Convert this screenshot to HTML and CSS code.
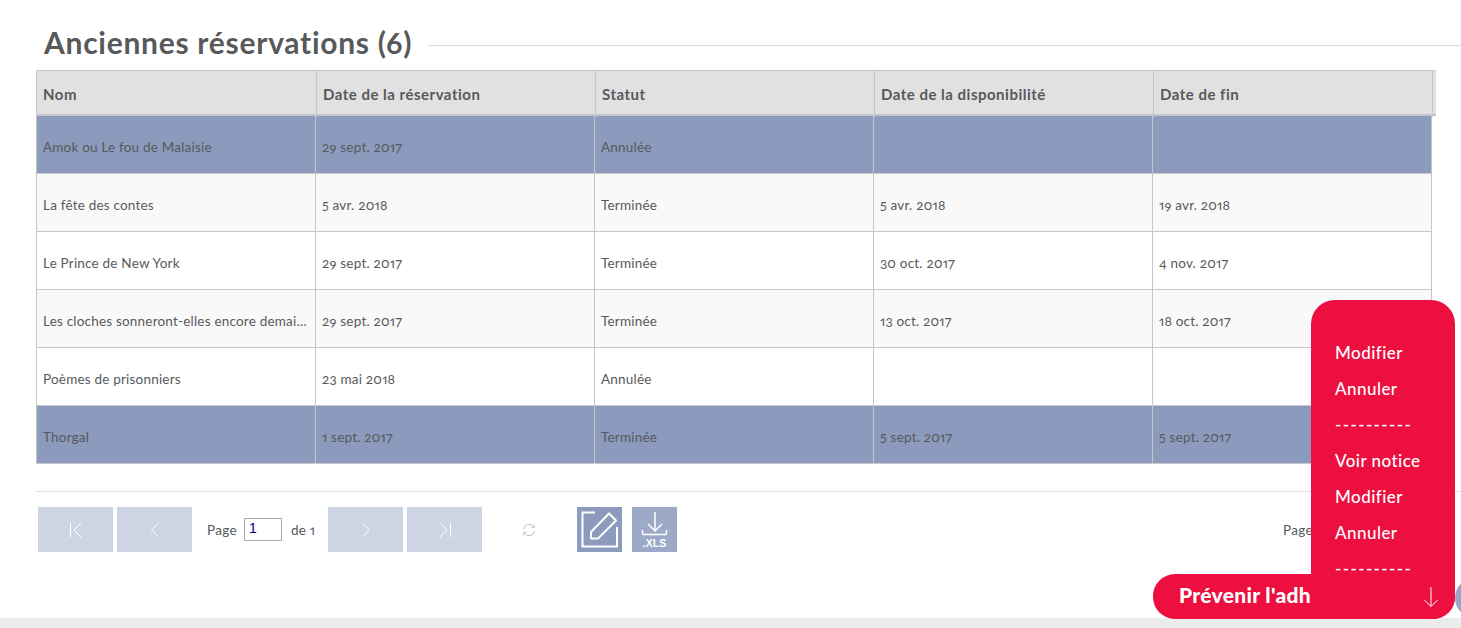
FILE: index.html
```html
<!DOCTYPE html>
<html lang="fr">
<head>
<meta charset="utf-8">
<title>Anciennes réservations</title>
<link rel="stylesheet" href="styles.css">
</head>
<body>
<main class="page">
  <div class="title-row">
    <h2 class="title">Anciennes réservations (6)</h2>
    <span class="title-rule"></span>
  </div>
  <div class="grid-wrap">
    <div class="head">
      <div class="hcell">Nom</div>
      <div class="hcell">Date de la réservation</div>
      <div class="hcell">Statut</div>
      <div class="hcell">Date de la disponibilité</div>
      <div class="hcell">Date de fin</div>
      <div class="hcell hcell-end"></div>
    </div>
    <div class="rows">
      <div class="row row-sel"><div class="cell">Amok ou Le fou de Malaisie</div><div class="cell">29 sept. 2017</div><div class="cell">Annulée</div><div class="cell"></div><div class="cell"></div></div>
      <div class="row row-alt"><div class="cell">La fête des contes</div><div class="cell">5 avr. 2018</div><div class="cell">Terminée</div><div class="cell">5 avr. 2018</div><div class="cell">19 avr. 2018</div></div>
      <div class="row"><div class="cell">Le Prince de New York</div><div class="cell">29 sept. 2017</div><div class="cell">Terminée</div><div class="cell">30 oct. 2017</div><div class="cell">4 nov. 2017</div></div>
      <div class="row row-alt"><div class="cell">Les cloches sonneront-elles encore demain ?</div><div class="cell">29 sept. 2017</div><div class="cell">Terminée</div><div class="cell">13 oct. 2017</div><div class="cell">18 oct. 2017</div></div>
      <div class="row"><div class="cell">Poèmes de prisonniers</div><div class="cell">23 mai 2018</div><div class="cell">Annulée</div><div class="cell"></div><div class="cell"></div></div>
      <div class="row row-sel"><div class="cell">Thorgal</div><div class="cell">1 sept. 2017</div><div class="cell">Terminée</div><div class="cell">5 sept. 2017</div><div class="cell">5 sept. 2017</div></div>
    </div>
  </div>
  <div class="pager">
    <button class="pg-btn" type="button" aria-label="Première page"><svg width="14" height="16" viewBox="0 0 14 16"><path d="M1.500 1v14M12 1 5 8l7 7" fill="none" stroke="#fff" stroke-width="1"/></svg></button>
    <button class="pg-btn" type="button" aria-label="Page précédente"><svg width="10" height="16" viewBox="0 0 10 16"><path d="M8.500 1 1.500 8l7 7" fill="none" stroke="#fff" stroke-width="1"/></svg></button>
    <span class="pg-label">Page</span>
    <input class="pg-input" type="text" value="1" aria-label="Page">
    <span class="pg-of">de 1</span>
    <button class="pg-btn" type="button" aria-label="Page suivante"><svg width="10" height="16" viewBox="0 0 10 16"><path d="M1.500 1l7 7-7 7" fill="none" stroke="#fff" stroke-width="1"/></svg></button>
    <button class="pg-btn" type="button" aria-label="Dernière page"><svg width="14" height="16" viewBox="0 0 14 16"><path d="M12.500 1v14M2 1l7 7-7 7" fill="none" stroke="#fff" stroke-width="1"/></svg></button>
    <span class="pg-refresh"><svg width="16" height="16" viewBox="0 0 16 16"><path d="M2.500 7a5.500 5.500 0 0 1 10-2.300M13.500 9a5.500 5.500 0 0 1-10 2.300" fill="none" stroke="#b9c2d6" stroke-width="1"/><path d="M13.400 2.400v3h-3M2.600 13.600v-3h3" fill="none" stroke="#b9c2d6" stroke-width="1"/></svg></span>
    <span class="tool tool-edit"><svg width="45" height="45" viewBox="0 0 45 45"><path d="M18 5.500H5.500V39.500H40V20" fill="none" stroke="#fff" stroke-width="2"/><path d="M14 25 32 6.500 39 13.500 21 31.500H14Z" fill="none" stroke="#fff" stroke-width="2" stroke-linejoin="round"/></svg></span>
    <span class="tool tool-xls"><svg class="xls-icon" width="45" height="30" viewBox="0 0 45 30"><path d="M23 5V24M16 17l7 7 7-7" fill="none" stroke="#fff" stroke-width="1.500"/><path d="M10.500 23v3.500q0 1 1 1H33.500q1 0 1-1V23" fill="none" stroke="#fff" stroke-width="1.500"/></svg><span class="xls-text">.XLS</span></span>
    <span class="pg-info">Page</span>
  </div>
</main>
<div class="band"></div>
<div class="fab-dot"></div>
<button class="notify" type="button">Prévenir l'adhérent</button>
<nav class="menu">
  <a class="menu-item">Modifier</a>
  <a class="menu-item">Annuler</a>
  <a class="menu-item menu-sep">----------</a>
  <a class="menu-item">Voir notice</a>
  <a class="menu-item">Modifier</a>
  <a class="menu-item">Annuler</a>
  <a class="menu-item menu-sep">----------</a>
  <svg class="menu-arrow" width="16" height="22" viewBox="0 0 16 22"><path d="M8 1V20.500M1.500 14l6.500 6.500 6.500-6.500" fill="none" stroke="#fff" stroke-width="1"/></svg>
</nav>
</body>
</html>
```
FILE: styles.css
```css
* { box-sizing: border-box; }
html, body { margin: 0; padding: 0; height: 628px; overflow: hidden; background: #fff; }
body { font-family: "Lato", "Open Sans", sans-serif; font-feature-settings: "onum", "pnum"; color: #58595b; position: relative; }
.page { height: 618px; padding: 24px 0 0 36px; }
.title-row { display: flex; align-items: center; height: 37px; margin-bottom: 9px; }
.title { margin: 0 0 0 8px; font-size: 30px; font-weight: 700; line-height: 37px; color: #58595b; white-space: nowrap; letter-spacing: 0.72px; }
.title-rule { flex: 1; height: 1px; background: #dcdcdc; margin: 6px 0 0 16px; }
.grid-wrap { width: 1400px; }
.head { display: grid; grid-template-columns: 280px 279px 279px 279px 279px 3px; height: 46px; background: #e1e1e1; border: 1px solid #c6c6c6; border-width: 1px 0 2px 1px; }
.hcell { padding: 0 6px; font-size: 15px; font-weight: 700; letter-spacing: 0.5px; line-height: 46px; color: #58595b; border-right: 1px solid #c6c6c6; white-space: nowrap; }
.hcell-end { padding: 0; border-right: 0; }
.rows { width: 1396px; border-left: 1px solid #c6c6c6; border-right: 1px solid #c6c6c6; }
.row { display: grid; grid-template-columns: 279px 279px 279px 279px 278px; height: 58px; background: #fff; border-bottom: 1px solid #c6c6c6; }
.row-alt { background: #f9f9f9; }
.row-sel { background: #8b9abd; }
.cell { padding: 5px 6px 0; font-size: 13.500px; letter-spacing: 0.2px; line-height: 53px; color: #58595b; border-right: 1px solid #c6c6c6; white-space: nowrap; overflow: hidden; text-overflow: ellipsis; }
.cell:last-child { border-right: 0; }
.pager { display: flex; align-items: flex-start; margin-top: 27px; padding: 15px 0 0 2px; border-top: 1px solid #e0e0e0; height: 70px; position: relative; }
.pg-btn { display: flex; align-items: center; justify-content: center; flex: 0 0 75px; height: 45px; margin: 0 4px 0 0; padding: 0; border: 0; background: #cdd4e3; }
.pg-label { flex: 0 0 31px; margin: 15px 6px 0 11px; font-size: 13.500px; letter-spacing: 0.3px; line-height: 17px; }
.pg-input { flex: 0 0 38px; width: 38px; height: 23px; margin: 11px 9px 0 0; padding: 0 4px 3px; border: 1px solid #a9a9a9; font: 14px "Liberation Sans", sans-serif; color: #000080; background: #fff; }
.pg-of { flex: 0 0 25px; margin: 15px 12px 0 0; font-size: 13.500px; letter-spacing: 0.2px; line-height: 17px; white-space: nowrap; }
.pg-refresh { display: flex; margin: 15px 0 0 35px; }
.tool { display: block; width: 45px; height: 45px; background: #8b9abd; }
.tool-edit { margin-left: 40px; }
.tool-xls { margin-left: 10px; background: #9ca9c7; position: relative; color: #fff; }
.xls-icon { display: block; }
.xls-text { display: block; font: 700 10.500px/12px "Liberation Sans", sans-serif; text-align: center; }
.pg-info { position: absolute; left: 1247px; top: 30px; font-size: 13.500px; letter-spacing: 0.3px; line-height: 17px; white-space: nowrap; }
.band { height: 10px; background: #ebebeb; }
.fab-dot { position: absolute; left: 1455px; top: 578px; width: 40px; height: 40px; border-radius: 50%; background: #9ea3cc; }
.notify { position: absolute; left: 1153px; top: 574px; width: 302px; height: 45px; padding: 0 0 4px 26px; border: 0; border-radius: 22px; background: #ec0f3f; color: #fff; font: 900 21px "Lato", sans-serif; letter-spacing: 0.3px; text-align: left; white-space: nowrap; overflow: hidden; }
.menu { position: absolute; left: 1311px; top: 300px; width: 144px; height: 319px; padding: 35px 0 0 24px; border-radius: 24px 24px 22px 0; background: #ec0f3f; display: flex; flex-direction: column; }
.menu-item { display: block; height: 36px; font-size: 17px; font-weight: 500; letter-spacing: 0.45px; line-height: 36px; color: #fff; white-space: nowrap; }
.menu-sep { letter-spacing: 1.400px; }
.menu-arrow { position: absolute; left: 112px; top: 286px; }
```
